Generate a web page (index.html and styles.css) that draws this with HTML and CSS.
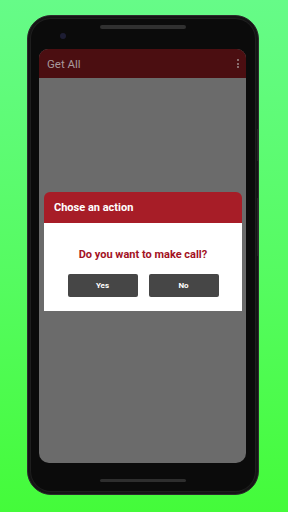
FILE: index.html
```html
<!DOCTYPE html>
<html>
<head>
<meta charset="utf-8">
<link rel="stylesheet" href="styles.css">
</head>
<body>
<div class="phone">
  <div class="side-btn side-btn-1"></div>
  <div class="side-btn side-btn-2"></div>
  <div class="top-bezel">
    <div class="camera"></div>
    <div class="speaker"></div>
  </div>
  <div class="screen">
    <div class="appbar">
      <span class="app-title">Get All</span>
      <span class="kebab"><i></i><i></i><i></i></span>
    </div>
    <div class="content"></div>
    <div class="dialog">
      <div class="dialog-header">Chose an action</div>
      <div class="dialog-body">
        <div class="question">Do you want to make call?</div>
        <div class="buttons">
          <div class="btn">Yes</div>
          <div class="btn">No</div>
        </div>
      </div>
    </div>
  </div>
  <div class="bottom-bezel">
    <div class="home-bar"></div>
  </div>
</div>
</body>
</html>
```
FILE: styles.css
```css
html, body {
  margin: 0;
  padding: 0;
  width: 288px;
  height: 512px;
  overflow: hidden;
}
body {
  background: linear-gradient(to bottom, #66fb88 0%, #55fb60 55%, #44fb3a 100%);
  font-family: Roboto, "Liberation Sans", sans-serif;
  display: flex;
  flex-direction: column;
  padding: 15px 0 0 27px;
  box-sizing: border-box;
}
.phone {
  position: relative;
  width: 232px;
  height: 480px;
  box-sizing: border-box;
  background: #0b0b0b;
  border-radius: 24px;
  border: 1px solid #2c2c2c;
  box-shadow: inset 0 0 0 2px #141414, inset 0 0 0 3px #1e1e1e;
  display: flex;
  flex-direction: column;
  padding: 0 12px 0 11px;
}
.side-btn {
  position: absolute;
  right: 0;
  width: 1px;
  background: #242424;
}
.side-btn-1 { top: 113px; height: 32px; }
.side-btn-2 { top: 182px; height: 58px; }
.top-bezel {
  position: relative;
  height: 33px;
  flex: none;
}
.speaker {
  position: absolute;
  left: 61px;
  top: 9px;
  width: 86px;
  height: 4px;
  border-radius: 2px;
  background: #303030;
}
.camera {
  position: absolute;
  left: 21px;
  top: 17px;
  width: 6px;
  height: 6px;
  border-radius: 50%;
  background: #1d1d33;
}
.screen {
  position: relative;
  height: 414px;
  flex: none;
  border-radius: 9px 9px 10px 10px;
  overflow: hidden;
  background: #6b6b6b;
  display: flex;
  flex-direction: column;
}
.appbar {
  height: 29px;
  background: #4b0e11;
  display: flex;
  align-items: center;
  justify-content: space-between;
  padding: 0 7px 0 8px;
  flex: none;
}
.app-title {
  color: #a8999b;
  font-size: 11.5px;
}
.kebab {
  display: flex;
  flex-direction: column;
  gap: 1.5px;
}
.kebab i {
  display: block;
  width: 2px;
  height: 2px;
  border-radius: 50%;
  background: #9c8c8d;
}
.content {
  flex: 1;
}
.dialog {
  position: absolute;
  left: 5px;
  top: 143px;
  width: 198px;
  display: flex;
  flex-direction: column;
}
.dialog-header {
  height: 31px;
  background: #a71d27;
  border-radius: 6px 6px 0 0;
  color: #ffffff;
  font-weight: bold;
  font-size: 11px;
  display: flex;
  align-items: center;
  padding-left: 10px;
}
.dialog-body {
  background: #ffffff;
  height: 88px;
  box-sizing: border-box;
  display: flex;
  flex-direction: column;
  align-items: center;
  padding-top: 25px;
}
.question {
  color: #a3121f;
  font-weight: bold;
  font-size: 11px;
  line-height: 14px;
}
.buttons {
  display: flex;
  gap: 11px;
  margin-top: 12px;
}
.btn {
  width: 70px;
  height: 23px;
  border-radius: 2px;
  background: #464646;
  color: #ffffff;
  font-weight: bold;
  font-size: 8px;
  display: flex;
  align-items: center;
  justify-content: center;
}
.bottom-bezel {
  position: relative;
  flex: 1;
}
.home-bar {
  position: absolute;
  left: 61px;
  top: 16px;
  width: 86px;
  height: 3px;
  border-radius: 2px;
  background: #2e2e2e;
}
```
